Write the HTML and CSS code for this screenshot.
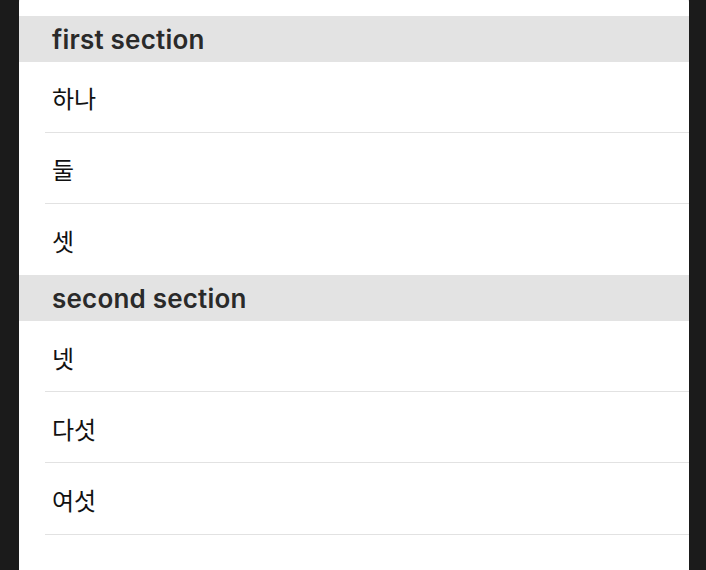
FILE: index.html
```html
<!DOCTYPE html>
<html lang="ko">
<head>
    <meta charset="UTF-8">
    <meta name="viewport" content="width=device-width, initial-scale=1.0">
    <title>Sections</title>
    <link rel="stylesheet" href="styles.css">
</head>
<body>
    <div class="sheet">
        <div class="section">
            <div class="section-header">first section</div>
            <div class="row">하나</div>
            <div class="row">둘</div>
            <div class="row last">셋</div>
        </div>
        <div class="section">
            <div class="section-header">second section</div>
            <div class="row">넷</div>
            <div class="row">다섯</div>
            <div class="row">여섯</div>
        </div>
    </div>
</body>
</html>
```

FILE: styles.css
```css
html, body {
    margin: 0;
    padding: 0;
    height: 100%;
    background-color: #1b1b1b;
    overflow: hidden;
}
.sheet {
    margin: -10px 0 0 19px;
    width: 670px;
    height: 600px;
    padding-top: 26px;
    box-sizing: border-box;
    background-color: #fff;
    border-radius: 12px 12px 0 0;
}
.section-header {
    height: 45.5px;
    box-sizing: border-box;
    padding-left: 33px;
    padding-top: 1px;
    display: flex;
    align-items: center;
    background-color: #e3e3e3;
    color: #2a2a2a;
    font-family: Inter, "Noto Sans", sans-serif;
    font-weight: 600;
    font-size: 26px;
    letter-spacing: 0.2px;
}
.row {
    height: 71.3px;
    box-sizing: border-box;
    margin-left: 26px;
    padding-left: 7px;
    padding-top: 2px;
    display: flex;
    align-items: center;
    border-bottom: 1px solid #e2e2e2;
    color: #111;
    font-family: "Noto Sans CJK KR", sans-serif;
    font-size: 24px;
}
.row.last {
    border-bottom: none;
}
```
